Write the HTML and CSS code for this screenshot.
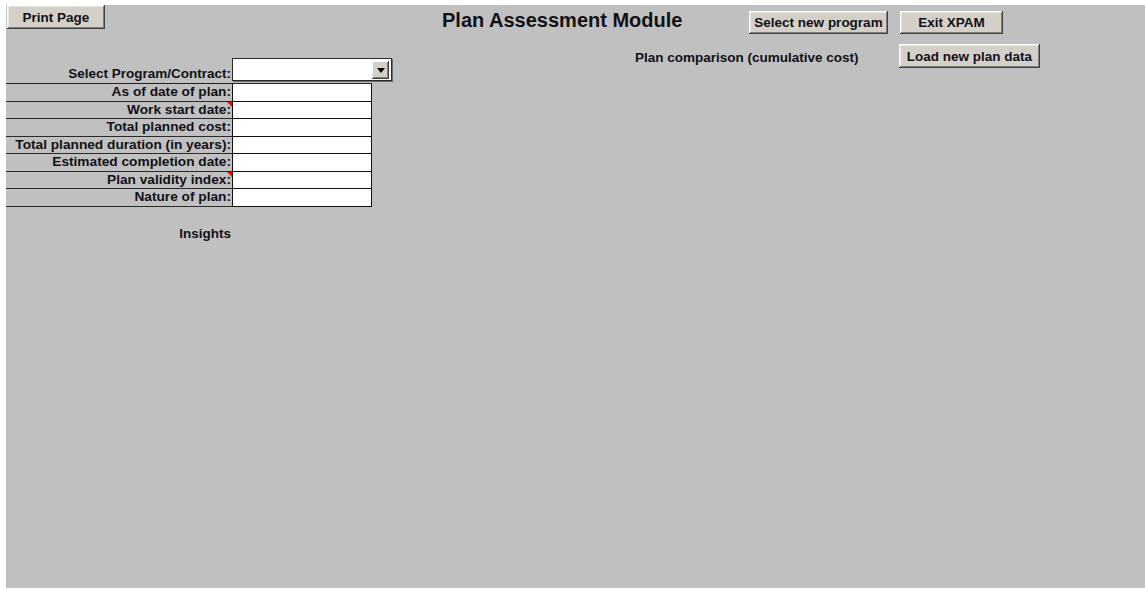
FILE: index.html
```html
<!DOCTYPE html>
<html lang="en">
<head>
<meta charset="utf-8">
<title>Plan Assessment Module</title>
<link rel="stylesheet" href="styles.css">
</head>
<body>
<div class="sheet">
  <div class="left">
    <button class="btn btn-print" type="button">Print Page</button>
    <div class="form">
      <div class="select-row">
        <span class="select-label">Select Program/Contract:</span>
        <div class="combo">
          <span class="combo-field"></span>
          <span class="combo-btn"><span class="arrow"></span></span>
        </div>
      </div>
      <div class="fields">
        <div class="cell-label">As of date of plan:</div><div class="cell-input"></div>
        <div class="cell-label note">Work start date:</div><div class="cell-input"></div>
        <div class="cell-label">Total planned cost:</div><div class="cell-input"></div>
        <div class="cell-label">Total planned duration (in years):</div><div class="cell-input"></div>
        <div class="cell-label">Estimated completion date:</div><div class="cell-input"></div>
        <div class="cell-label note">Plan validity index:</div><div class="cell-input"></div>
        <div class="cell-label">Nature of plan:</div><div class="cell-input"></div>
      </div>
      <div class="insights">Insights</div>
    </div>
  </div>
  <div class="right">
    <div class="head-row">
      <h1 class="title">Plan Assessment Module</h1>
      <button class="btn btn-select" type="button">Select new program</button>
      <button class="btn btn-exit" type="button">Exit XPAM</button>
    </div>
    <div class="sub-row">
      <span class="caption">Plan comparison (cumulative cost)</span>
      <button class="btn btn-load" type="button">Load new plan data</button>
    </div>
  </div>
</div>
</body>
</html>
```

FILE: styles.css
```css
html, body {
  margin: 0;
  padding: 0;
  background: #ffffff;
}

body {
  font-family: "Liberation Sans", Arial, sans-serif;
  font-weight: bold;
  font-size: 13.5px;
  color: #111118;
}

/* grey worksheet area */
.sheet {
  margin: 5px 0 0 6px;
  height: 583px;
  background: #c0c0c0;
  display: flex;
  align-items: flex-start;
}

/* classic raised push button */
.btn {
  font-family: inherit;
  font-weight: bold;
  font-size: 13.5px;
  color: #111118;
  background: #d4d0c8;
  border: 0;
  padding: 0;
  margin: 0;
  height: 23px;
  box-sizing: border-box;
  box-shadow:
    inset -1px -1px 0 #404040,
    inset 1px 1px 0 #ffffff,
    inset -2px -2px 0 #808080,
    inset 2px 2px 0 #e8e6e0;
  cursor: default;
}

/* left column: print button and the plan form */
.left {
  width: 386px;
  flex: none;
}

.btn-print {
  margin-left: 1px;
  width: 98px;
  height: 24px;
}

.form {
  margin-top: 29px;
}

.select-row {
  display: flex;
  align-items: flex-start;
  height: 25px;
}

.select-label {
  width: 226px;
  text-align: right;
  padding-right: 1px;
  box-sizing: border-box;
  line-height: 16px;
  padding-top: 8px;
}

.combo {
  width: 160px;
  height: 23px;
  box-sizing: border-box;
  background: #ffffff;
  border: 1px solid #2a2a2a;
  box-shadow: 1px 1px 0 #6a6a6a;
  display: flex;
  justify-content: space-between;
  padding: 2px 2px 1px 0;
}

.combo-field {
  flex: 1;
}

.combo-btn {
  width: 17px;
  height: 18px;
  background: #d4d0c8;
  box-shadow:
    inset -1px -1px 0 #404040,
    inset 1px 1px 0 #ffffff,
    inset -2px -2px 0 #808080;
  display: flex;
  align-items: center;
  justify-content: center;
}

.arrow {
  width: 0;
  height: 0;
  margin-top: 1px;
  border-left: 4px solid transparent;
  border-right: 4px solid transparent;
  border-top: 5px solid #000000;
}

/* label / value table */
.fields {
  display: grid;
  grid-template-columns: 226px 140px;
  grid-auto-rows: 17.5px;
  width: 366px;
  border-top: 1px solid #222222;
}

.cell-label {
  position: relative;
  box-sizing: border-box;
  border-bottom: 1px solid #2a2a2a;
  text-align: right;
  padding-right: 1px;
  font-size: 13.7px;
  line-height: 16px;
  white-space: nowrap;
}

/* comment marker in the cell corner */
.cell-label.note::after {
  content: "";
  position: absolute;
  top: 0;
  right: 0;
  width: 0;
  height: 0;
  border-top: 5px solid #ff0000;
  border-left: 5px solid transparent;
}

.cell-input {
  box-sizing: border-box;
  background: #ffffff;
  border: 1px solid #111111;
  border-top: 0;
}

.insights {
  width: 225px;
  text-align: right;
  margin-top: 19px;
  line-height: 16px;
}

/* right area: title, actions and chart caption */
.right {
  flex: 1;
}

.head-row {
  display: flex;
  align-items: flex-start;
  margin-top: 6px;
  padding-left: 50px;
}

.title {
  margin: -2px 0 0 0;
  width: 307px;
  font-size: 20px;
  line-height: 23px;
  font-weight: bold;
  white-space: nowrap;
}

.btn-select {
  width: 139px;
}

.btn-exit {
  width: 103px;
  margin-left: 12px;
}

.sub-row {
  display: flex;
  align-items: flex-start;
  margin-top: 10px;
  padding-left: 243px;
}

.caption {
  width: 264px;
  line-height: 16px;
  padding-top: 6px;
  white-space: nowrap;
}

.btn-load {
  width: 141px;
  height: 24px;
}
```
